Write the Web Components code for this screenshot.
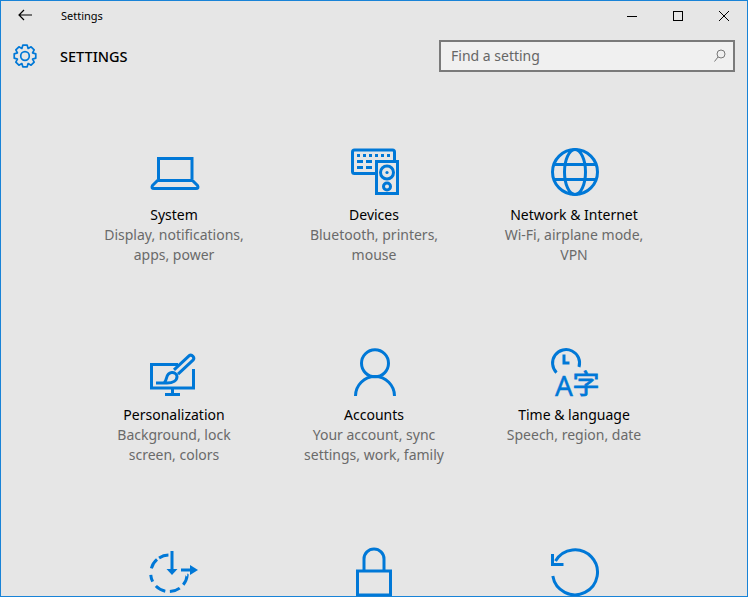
<!DOCTYPE html>
<html>
<head>
<meta charset="utf-8">
<title>Settings</title>
<style>
	html, body { margin: 0; padding: 0; height: 100%; overflow: hidden; }
	settings-tile svg { fill: none; stroke: #0078d7; stroke-width: 3; display: block; overflow: visible; }
</style>
</head>
<body>
<settings-window>
	<title-bar slot="top" caption="Settings"></title-bar>
	<page-header slot="top" heading="SETTINGS"></page-header>

	<settings-tile>
		<svg slot="icon" width="70" height="60" viewBox="-1 0 70 60">
			<path d="M18.5 39V18.5H52V39"/>
			<path d="M17.5 40.5 12.5 45.5Q11 48.5 14 48.5H56Q59 48.5 57.5 45.5L52.5 40.5Z" stroke-linejoin="round"/>
		</svg>
		System
		<span slot="desc">Display, notifications,<br>apps, power</span>
	</settings-tile>
	<settings-tile>
		<svg slot="icon" width="70" height="60" viewBox="-1 0 70 60">
			<path d="M35 33.5H14.5Q12.5 33.5 12.5 31.5V12Q12.5 10 14.5 10H52.5Q54.5 10 54.5 12V20"/>
			<rect x="36.5" y="21.5" width="21" height="32"/>
			<circle cx="47" cy="32.5" r="6.5"/>
			<circle cx="47" cy="32.5" r="1.6" fill="#0078d7" stroke="none"/>
			<circle cx="47" cy="46.5" r="3.5"/>
			<path d="M17 15.5h3M23 15.5h3M29 15.5h3M35 15.5h3M41 15.5h3M47 15.5h3M17 21.5h6M26 21.5h6M17 27.5h6M26 27.5h6"/>
		</svg>
		Devices
		<span slot="desc">Bluetooth, printers,<br>mouse</span>
	</settings-tile>
	<settings-tile>
		<svg slot="icon" width="70" height="60" viewBox="-1 0 70 60">
			<circle cx="35" cy="32" r="22.5"/>
			<ellipse cx="35" cy="32" rx="10.5" ry="22.5"/>
			<path d="M13 24.5H57M13 39.5H57"/>
		</svg>
		Network &amp; Internet
		<span slot="desc">Wi-Fi, airplane mode,<br>VPN</span>
	</settings-tile>

	<settings-tile>
		<svg slot="icon" width="70" height="60" viewBox="-1 0 70 60">
			<g transform="translate(0 5)">
				<path d="M38 19.5H11.5V43H53.5V24"/>
				<path d="M32.5 44V49.5M25 49.5H40"/>
				<path d="M16 38H27C33 38 37 35.5 37 31.5C37 29 34 27 31.5 27.5C28 28 27 31 26.5 33C26 35.5 25.5 36.5 24 38" stroke-linejoin="round"/>
				<path d="M34 24.8 49 10.8A3 3 0 0 1 53 15.2L38 29.2" stroke-linejoin="round"/>
			</g>
		</svg>
		Personalization
		<span slot="desc">Background, lock<br>screen, colors</span>
	</settings-tile>
	<settings-tile>
		<svg slot="icon" width="70" height="60" viewBox="-1 0 70 60">
			<g transform="translate(0 5)">
				<circle cx="35" cy="18.3" r="13.5"/>
				<path d="M15.5 51A19.5 19.5 0 0 1 54.5 51"/>
			</g>
		</svg>
		Accounts
		<span slot="desc">Your account, sync<br>settings, work, family</span>
	</settings-tile>
	<settings-tile>
		<svg slot="icon" width="70" height="60" viewBox="-1 0 70 60">
			<g transform="translate(0 5)">
				<path d="M16.5 27.6A13.5 13.5 0 1 1 39 22"/>
				<path d="M24 9.5V18H29.5"/>
				<text x="15" y="51" fill="#0078d7" stroke="#0078d7" stroke-width=".4" font-family="'Noto Sans',sans-serif" font-size="28">A</text>
				<text x="32.5" y="48.5" fill="#0078d7" stroke="#0078d7" stroke-width=".8" font-family="'Noto Sans CJK SC',sans-serif" font-size="27">字</text>
			</g>
		</svg>
		Time &amp; language
		<span slot="desc">Speech, region, date</span>
	</settings-tile>

	<!-- third row is cut by the window edge, only the icons show -->
	<settings-tile>
		<svg slot="icon" width="70" height="60" viewBox="-1 0 70 60">
			<circle cx="29" cy="33.3" r="18.3" pathLength="360" stroke-dasharray="34 15 33 15 34 17 22 21 33 8 31 97" transform="rotate(5 29 33.3)"/>
			<path d="M32 11V32"/>
			<path d="M26.5 29H37.5L32 35Z" fill="#0078d7" stroke="none"/>
			<path d="M41 30H52"/>
			<path d="M50 25 58 30 50 35Z" fill="#0078d7" stroke="none"/>
		</svg>
	</settings-tile>
	<settings-tile>
		<svg slot="icon" width="70" height="60" viewBox="-1 0 70 60">
			<path d="M24 30V19A10 10 0 0 1 44 19V30"/>
			<rect x="17.5" y="31" width="33" height="24"/>
		</svg>
	</settings-tile>
	<settings-tile>
		<svg slot="icon" width="70" height="60" viewBox="-1 0 70 60">
			<path d="M15.5 21A22.5 22.5 0 1 1 12.8 36"/>
			<path d="M12.5 14V24.5H23.5"/>
		</svg>
	</settings-tile>
</settings-window>

<script>
const windowTpl = document.createElement("template");
windowTpl.innerHTML = `
	<style>
		:host{ display:block; box-sizing:border-box; width:748px; height:597px; overflow:hidden; background:#e6e6e6; border:1px solid #1883d7; font-family:"Noto Sans",sans-serif; }
		.grid{ display:grid; grid-template-columns:repeat(3,200px); grid-auto-rows:200px; padding:59px 0 0 73px; }
	</style>
	<slot name="top"></slot>
	<div class="grid"><slot></slot></div>
`;
class SettingsWindow extends HTMLElement {
	constructor() {
		super();
		this.attachShadow({ mode: "open" }).appendChild(windowTpl.content.cloneNode(true));
	}
}

class TitleBar extends HTMLElement {
	constructor() {
		super();
		this.attachShadow({ mode: "open" });
	}
	connectedCallback() {
		this.shadowRoot.innerHTML = `
			<style>
				:host{ display:flex; align-items:center; height:30px; color:#000; }
				.back{ width:48px; height:28px; margin-bottom:2px; display:flex; align-items:center; justify-content:center; }
				.caption{ margin:0 0 2px 12px; font-size:11px; flex:1; }
				.ctl{ width:46px; height:30px; display:flex; align-items:center; justify-content:center; }
				svg{ display:block; fill:none; stroke:#000; stroke-width:1; }
			</style>
			<div class="back"><svg width="14" height="12" viewBox="0 0 14 12"><path stroke-width="1.2" d="M1 6H14M6 1 1 6 6 11"/></svg></div>
			<span class="caption">${this.getAttribute("caption")}</span>
			<div class="ctl"><svg width="10" height="10" viewBox="0 0 10 10"><path d="M0 5.5H10"/></svg></div>
			<div class="ctl"><svg width="10" height="10" viewBox="0 0 10 10"><rect x=".5" y=".5" width="9" height="9"/></svg></div>
			<div class="ctl"><svg width="10" height="10" viewBox="0 0 10 10"><path d="M0 0 10 10M10 0 0 10"/></svg></div>
		`;
	}
}

// eight toothed cog, easier to compute than to write by hand
function gearPath(cx, cy, outer, root) {
	const pts = [];
	for (let i = 0; i < 8; i++) {
		const a = (i * Math.PI) / 4 - Math.PI / 2;
		[[-0.39, root], [-0.2, outer], [0.2, outer], [0.39, root]].forEach(([d, r]) => {
			pts.push((cx + r * Math.cos(a + d)).toFixed(2) + " " + (cy + r * Math.sin(a + d)).toFixed(2));
		});
	}
	return "M" + pts.join("L") + "Z";
}

class PageHeader extends HTMLElement {
	constructor() {
		super();
		this.attachShadow({ mode: "open" });
	}
	connectedCallback() {
		this.shadowRoot.innerHTML = `
			<style>
				:host{ display:flex; align-items:center; height:50px; padding:0 12px; }
				svg.gear{ display:block; width:24px; height:24px; fill:none; stroke:#0078d7; stroke-width:1.7; }
				h1{ margin:0 0 0 23px; flex:1; font-size:14.5px; font-weight:500; color:#000; }
			</style>
			<svg class="gear" viewBox="0 0 24 24"><path stroke-linejoin="round" d="${gearPath(12, 12, 11, 8.2)}"/><circle cx="12" cy="12" r="4.3"/></svg>
			<h1>${this.getAttribute("heading")}</h1>
			<search-box placeholder="Find a setting"></search-box>
		`;
	}
}

class SearchBox extends HTMLElement {
	constructor() {
		super();
		this.attachShadow({ mode: "open" });
	}
	connectedCallback() {
		this.shadowRoot.innerHTML = `
			<style>
				:host{ display:flex; align-items:center; justify-content:space-between; box-sizing:border-box; width:296px; height:32px; padding:0 7px 2px 10px; border:2px solid #7a7a7a; background:#f0f0f0; color:#666; font-size:14px; }
				svg{ display:block; fill:none; stroke:#777; stroke-width:1; }
			</style>
			<span>${this.getAttribute("placeholder")}</span>
			<svg width="12" height="13" viewBox="0 0 12 13"><circle cx="7" cy="5" r="4"/><path d="M4 8 .5 12.5"/></svg>
		`;
	}
}

const tileTpl = document.createElement("template");
tileTpl.innerHTML = `
	<style>
		:host{ display:flex; flex-direction:column; align-items:center; text-align:center; font-size:14px; line-height:20px; color:#000; }
		.icon{ display:block; width:70px; height:60px; margin-bottom:5px; }
		.desc{ color:#6a6a6a; }
	</style>
	<div class="icon"><slot name="icon"></slot></div>
	<div><slot></slot></div>
	<div class="desc"><slot name="desc"></slot></div>
`;
class SettingsTile extends HTMLElement {
	constructor() {
		super();
		this.attachShadow({ mode: "open" }).appendChild(tileTpl.content.cloneNode(true));
	}
}

customElements.define("settings-window", SettingsWindow);
customElements.define("title-bar", TitleBar);
customElements.define("search-box", SearchBox);
customElements.define("page-header", PageHeader);
customElements.define("settings-tile", SettingsTile);
</script>
</body>
</html>
